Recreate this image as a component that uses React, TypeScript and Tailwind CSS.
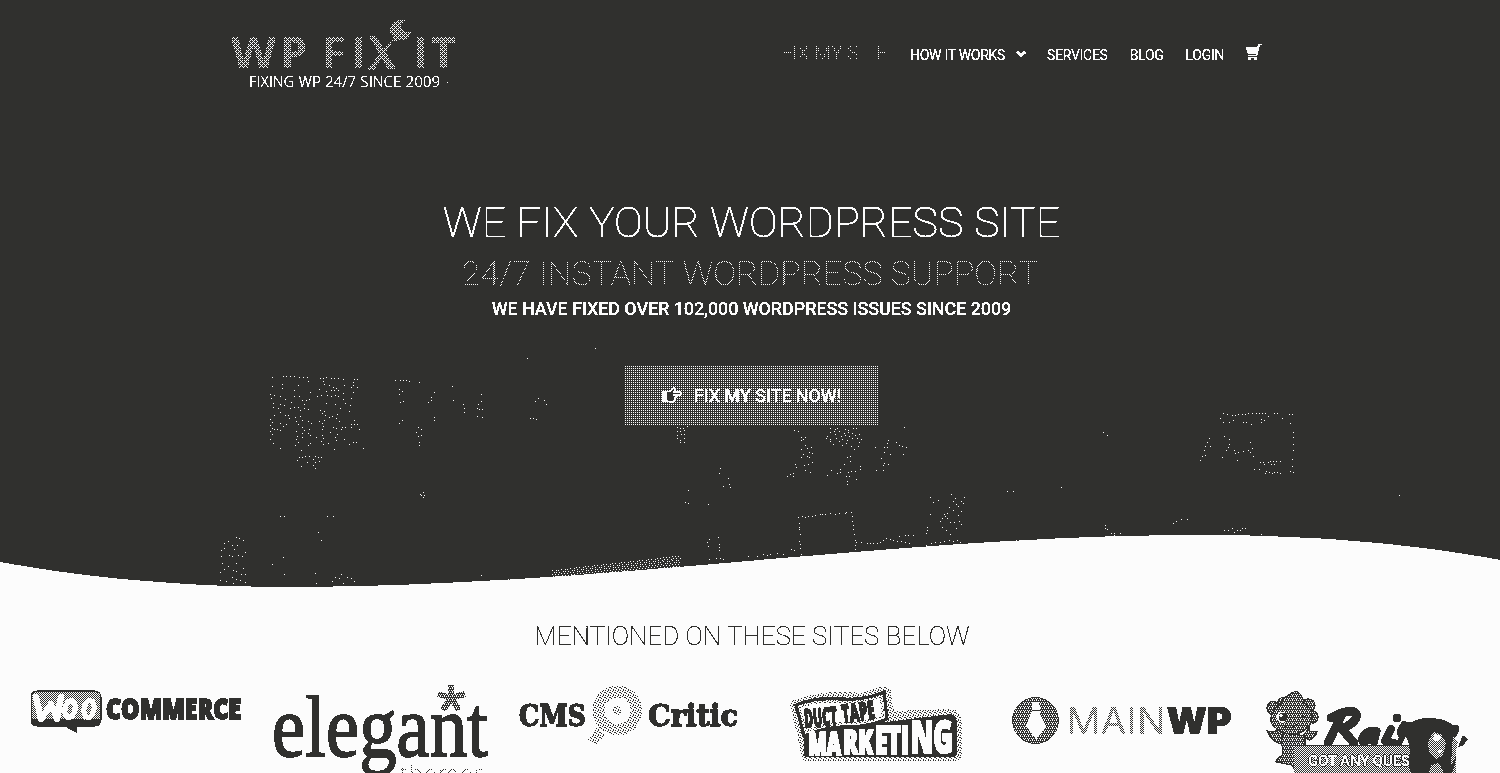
import React from "react";

const INK = "#30302e";
const PAPER = "#fcfcfc";

/* Specks of the hero illustration, three units per pixel, grouped by origin. */
const SPECKS: { x: number; y: number; pts: string }[] = [
  {
    x: 210,
    y: 340,
    pts: "1156,25 952,55 187,112 220,109 229,109 241,109 253,109 268,112 280,112 292,112 331,115 340,115 349,112 364,115 373,115 385,115 400,118 433,118 442,118 187,139 217,133 217,145 265,136 253,151 295,124 340,124 343,133 358,136 370,142 379,145 364,151 373,151 385,151 403,136 430,127 430,136 424,142 442,142 301,157 328,148 349,154 400,160 430,157 181,163 193,166 184,175 211,169 226,178 253,169 268,169 322,169 334,166 352,166 364,169 376,166 385,169 400,178 424,175 277,181 289,181 298,178 244,187 190,190 211,193 223,196 283,193 349,190 376,193 406,190 421,196 190,202 205,205 241,205 253,202 265,202 271,211 283,205 295,208 391,205 331,211 343,214 418,214 211,217 337,220 382,223 193,226 226,226 235,226 238,235 256,232 271,229 346,226 358,232 367,229 379,235 181,238 187,247 259,244 277,241 295,244 304,250 328,244 343,241 388,244 433,241 181,256 211,250 229,253 220,259 265,253 277,262 337,250 340,259 424,253 433,253 442,253 187,265 193,268 202,268 211,271 283,271 298,268 337,268 370,262 379,265 394,268 397,262 406,262 424,262 448,268 181,274 187,283 259,274 277,280 295,280 301,286 361,277 382,283 337,286 262,289 277,292 319,292 340,295 376,292 181,298 259,298 265,307 334,304 379,301 403,298 190,310 256,316 295,316 301,310 340,313 355,310 418,313 430,307 439,307 211,325 274,331 373,328 460,325 262,361 268,352 277,352 286,349 298,349 316,349 325,352 334,352 310,358 292,367 316,367 328,364 310,376 274,379 316,385 556,121 571,121 580,121 589,121 598,124 628,127 568,148 577,154 568,163 571,187 580,184 568,250 577,241 673,157 664,172 664,181 655,187 673,232 673,241 625,262 634,268 619,277 625,289 634,286 628,307 628,316 727,139 730,181 760,193 763,205 763,217 814,163 814,184 805,193 802,205 808,208 817,208 802,229 817,232 985,175 976,184 1003,181 1009,193 961,235 970,235 979,238 640,457 631,463 634,466 643,466 640,472 211,529 223,529 352,529 370,529 325,577 334,601 79,592 88,595 100,601 55,604 43,610 67,616 82,616 43,625 34,631 73,628 106,637 34,649 58,646 67,649 85,646 97,649 37,670 79,670 55,679 43,688 70,691 79,694 100,685 31,697 94,703 106,703 67,712 79,718 31,721 49,724 91,721 106,727 70,730 220,652 187,673 223,703 316,700 319,730 394,703 376,712 388,715 412,712 424,715 367,724 400,730 433,724 814,706",
  },
  {
    x: 540,
    y: 340,
    pts: "13,181 19,193 412,262 421,265 430,265 442,259 412,274 421,274 433,271 412,286 424,283 433,283 412,295 421,301 433,295 421,307 433,307 763,271 775,274 1093,262 784,292 796,292 784,301 790,298 796,316 802,325 814,322 784,328 808,337 817,340 790,343 802,349 808,352 784,352 817,367 766,373 769,382 793,376 805,373 796,391 811,397 760,400 751,403 742,409 760,409 871,265 886,268 892,265 916,268 925,271 940,265 949,265 871,277 883,274 898,274 913,280 925,277 937,280 958,283 862,289 886,283 904,289 916,286 928,289 946,286 859,295 871,298 889,295 907,298 922,301 937,295 952,295 964,298 871,304 898,304 919,310 958,307 880,313 907,316 934,319 955,319 943,328 922,352 931,349 931,364 913,373 961,379 901,388 925,397 934,394 946,394 961,388 874,391 892,400 901,397 862,406 919,409 928,409 949,418 922,424 922,433 1006,322 1045,301 1042,310 1033,322 1042,322 1069,307 1078,316 1087,319 1099,322 1033,337 1051,343 1090,343 1024,355 1033,370 1045,373 1030,376 1030,391 1009,391 541,385 538,400 565,415 550,439 568,433 571,442 445,451 436,487 445,490 505,493 775,532 787,529 796,532 805,529 817,529 826,526 841,523 847,523 856,523 871,520 886,523 898,520 916,520 919,517 934,517 778,550 778,562 778,568 781,583 778,604 781,613 781,625 784,643 937,529 937,544 940,556 940,568 943,583 946,601 946,616 946,628 949,607 964,607 982,610 991,610 1000,610 1012,610 1021,607 1030,601 1039,595 1051,598 1060,601 1072,604 1084,604 1096,607 1108,610 1078,589 1096,586 1105,586 1120,586 1171,472 1180,487 1195,481 1234,463 1246,475 1273,472 1240,484 1264,484 1249,493 1270,490 1228,502 1255,499 1240,511 1264,514 1213,523 1222,520 1216,529 1222,535 1207,535 1255,526 1258,544 1243,547 1231,547 1201,544 1264,553 1207,562 1219,571 1249,565 1231,583 1171,523 1162,562 1162,571 1159,580 508,598 502,607 505,619 535,592 538,613 538,622 538,631 508,658 529,655 541,655 550,658 625,649 652,649 670,643 682,646 691,643 712,640 730,643 754,628 763,631 1159,616 1174,610 1186,607 1201,607 1213,604 1228,601 1240,604 1252,601 1261,607",
  },
  {
    x: 980,
    y: 390,
    pts: "730,70 742,73 757,76 766,76 775,73 787,73 796,73 805,70 817,70 829,70 838,70 847,70 856,70 865,79 883,70 892,70 928,73 937,73 721,85 730,97 748,97 760,91 790,97 799,97 814,103 844,88 853,91 844,97 907,85 931,100 940,127 940,142 940,163 940,181 937,208 937,229 931,244 940,247 688,145 682,157 676,169 691,169 673,181 676,196 667,199 661,211 733,139 748,148 748,163 745,172 739,181 727,202 763,181 766,190 775,187 790,184 805,181 811,157 817,175 811,187 820,199 772,211 841,217 850,217 853,223 865,217 871,214 880,214 889,214 901,214 874,223 883,223 823,238 838,238 859,244 856,250 868,247 877,250 883,247 892,247 901,250 370,127 382,136 82,304 100,304 244,292 1258,316 376,406 376,415 382,418 394,430 403,430 403,436 421,430 580,400 589,394 604,388 622,388 733,421 745,421 757,415 763,427 772,421 781,421 787,415 796,415 844,433",
  },
];

/* The dotted plank that rises along the left side of the wave. */
function plank() {
  let d = "";
  for (let x = 552; x < 680; x += 3) {
    const top = 570 - (x - 554) * 0.115;
    const end = 580 - (x - 554) * 0.1;
    let row = 0;
    for (let y = Math.round(top); y < end; y += 2) {
      const jitter = (x * 7 + y * 13) % 5 === 0 ? 1 : 0;
      d += `M${x + jitter + (row % 2)} ${y}h1v1h-1z`;
      row++;
    }
  }
  return d;
}

function specks() {
  return SPECKS.map((g) =>
    g.pts
      .split(" ")
      .map((p) => {
        const [a, b] = p.split(",").map(Number);
        return `M${g.x + Math.floor(a / 3)} ${g.y + Math.floor(b / 3)}h1v1h-1z`;
      })
      .join(""),
  ).join("");
}

function Defs() {
  return (
    <svg width="0" height="0" className="absolute" aria-hidden="true">
      <defs>
        <filter id="mono" x="0" y="0" width="100%" height="100%" colorInterpolationFilters="sRGB">
          <feColorMatrix type="matrix" values=".33 .34 .33 0 0 .33 .34 .33 0 0 .33 .34 .33 0 0 0 0 0 1 0" />
          <feComponentTransfer>
            <feFuncR type="discrete" tableValues=".1883 .9883" />
            <feFuncG type="discrete" tableValues=".1883 .9883" />
            <feFuncB type="discrete" tableValues=".1805 .9883" />
          </feComponentTransfer>
        </filter>
        <pattern id="lightCheck" width="4" height="4" patternUnits="userSpaceOnUse">
          <path d="M0 0h1v1h-1zM2 0h1v1h-1zM1 1h1v1h-1zM0 2h1v1h-1zM2 2h1v1h-1zM3 3h1v1h-1z" fill={PAPER} shapeRendering="crispEdges" />
        </pattern>
        <pattern id="check" width="2" height="2" patternUnits="userSpaceOnUse">
          <rect width="2" height="2" fill={PAPER} />
          <path d="M0 0h1v1h-1zM1 1h1v1h-1z" fill={INK} shapeRendering="crispEdges" />
        </pattern>
        <pattern id="dense" width="4" height="4" patternUnits="userSpaceOnUse">
          <rect width="4" height="4" fill={INK} />
          <path d="M0 0h1v1h-1zM2 0h1v1h-1zM1 2h1v1h-1zM3 2h1v1h-1zM0 3h1v1h-1z" fill={PAPER} shapeRendering="crispEdges" />
        </pattern>
        <pattern id="faint" width="5" height="5" patternUnits="userSpaceOnUse">
          <path d="M0 0h1v1h-1zM2 1h1v1h-1zM4 2h1v1h-1zM1 3h1v1h-1zM3 4h1v1h-1zM3 0h1v1h-1zM0 2h1v1h-1z" fill={INK} shapeRendering="crispEdges" />
        </pattern>
        <linearGradient id="wooFade" x1="0" y1="0" x2="0" y2="1">
          <stop offset=".45" stopColor={INK} stopOpacity="0" />
          <stop offset=".85" stopColor={INK} stopOpacity="1" />
        </linearGradient>
      </defs>
    </svg>
  );
}

function HeroArt() {
  return (
    <svg className="absolute inset-0" width="1500" height="600" viewBox="0 0 1500 600" aria-hidden="true">
      <path d={specks() + plank()} fill={PAPER} shapeRendering="crispEdges" />
      <path d="M0 562C80 577 180 587 290 587C600 587 900 535 1200 535C1320 535 1420 545 1500 560V600H0Z" fill={PAPER} />
    </svg>
  );
}

function Brand() {
  return (
    <svg width="230" height="76" viewBox="230 14 230 76" className="shrink-0">
      <g fill="url(#lightCheck)" fontFamily="'Open Sans', sans-serif" fontWeight="700" fontSize="43">
        <text x="231" y="68" textLength="45" lengthAdjust="spacingAndGlyphs">W</text>
        <text x="280 322 351" y="68">PFI</text>
        <text x="413 431" y="68">IT</text>
        <path d="M369 36q5-1 8 2l19 31h-8zM367 70l27-33q-6-4-3-11q5-8 14-6q-6 4-3 10q3 4 9 2q-1 8-11 8l-7 1l-19 29z" />
      </g>
      <text x="249" y="87" fill={PAPER} fontFamily="'Open Sans', sans-serif" fontWeight="300" stroke={PAPER} strokeWidth=".15" fontSize="14.500" textLength="191">
        FIXING WP 24/7 SINCE 2009
      </text>
      <rect x="447" y="82" width="1" height="1" fill={PAPER} />
    </svg>
  );
}

function WooCommerce() {
  return (
    <svg width="212" height="93" viewBox="31 680 212 93">
      <path d="M38 691h56q7 0 7 7v21q0 7-7 7H76v6l-11-6H38q-7 0-7-7v-21q0-7 7-7z" fill="url(#check)" />
      <path d="M38 691h56q7 0 7 7v21q0 7-7 7H76v6l-11-6H38q-7 0-7-7v-21q0-7 7-7z" fill="url(#wooFade)" stroke={INK} strokeWidth="1.4" />
      <g fill="none" stroke={PAPER} strokeWidth="6" strokeLinecap="round" strokeLinejoin="round">
        <path d="M36 697L41 719L51 704L57 719L61 697" />
        <ellipse cx="70" cy="709" rx="5" ry="8.500" transform="rotate(12 70 709)" strokeWidth="5" />
        <ellipse cx="89" cy="709" rx="5" ry="8.500" transform="rotate(12 89 709)" strokeWidth="5" />
      </g>
      <text x="106" y="718.500" fill={INK} stroke={INK} strokeWidth="2" fontFamily="'Open Sans', sans-serif" fontWeight="800" fontSize="28" textLength="135" lengthAdjust="spacingAndGlyphs">
        COMMERCE
      </text>
    </svg>
  );
}

function Elegant() {
  return (
    <svg width="218" height="93" viewBox="273 680 218 93">
      <text x="272" y="756" fill={INK} stroke={INK} strokeWidth="2" fontFamily="'Liberation Serif', serif" fontSize="87" textLength="216" lengthAdjust="spacingAndGlyphs">
        elegant
      </text>
      <path d="M451 698V685M451 698L438 694M451 698L465 694M451 698L443 710M451 698L459 710" stroke="url(#dense)" strokeWidth="6" fill="none" />
      <text x="400" y="782" fill="url(#check)" fontFamily="'Open Sans', sans-serif" fontWeight="300" fontSize="23" textLength="85">
        themes
      </text>
    </svg>
  );
}

function CmsCritic() {
  return (
    <svg width="224" height="93" viewBox="517 680 224 93">
      <g fill={INK} stroke={INK} strokeWidth="1.700" fontFamily="'DejaVu Serif', serif" fontWeight="700" fontSize="30">
        <text x="519" y="726" textLength="67" lengthAdjust="spacingAndGlyphs">CMS</text>
        <text x="648" y="726" textLength="90" lengthAdjust="spacingAndGlyphs">Critic</text>
      </g>
      <circle cx="617.500" cy="710.500" r="19" fill="none" stroke="url(#faint)" strokeWidth="12" />
      <circle cx="617" cy="710.500" r="4.500" fill="url(#faint)" />
      <path d="M596 727l9 7-8 11-9-5z" fill="url(#faint)" />
    </svg>
  );
}

function DuctTape() {
  return (
    <svg width="178" height="93" viewBox="787 680 178 93">
      <g fill="url(#faint)" stroke="url(#faint)" strokeWidth="12" strokeLinejoin="round">
        <path d="M796 705Q830 695 860 699Q872 696 885 692L889 717L950 715Q956 715 956 724V755H807L804 738Z" />
      </g>
      <path d="M804 738L830 728L885 722L950 714Q957 714 957 724V754Q957 757 953 757H806Q804 757 804 754Z" fill={INK} />
      <path d="M796 705Q815 697 842 699Q862 701 884 692L887 719Q865 728 842 727Q822 728 804 736Z" fill={PAPER} stroke={INK} strokeWidth="3.500" />
      <path d="M799 708Q815 700 842 702Q862 704 881 696L883 716Q865 724 842 723Q822 724 807 731Z" fill="none" stroke="url(#faint)" strokeWidth="3" />
      <g fontFamily="'Open Sans', sans-serif" fontWeight="800">
        <text x="805" y="728" transform="rotate(-5 805 728)" fontSize="26" fill={INK} stroke={INK} strokeWidth="1.800" textLength="33" lengthAdjust="spacingAndGlyphs">DUCT</text>
        <text x="843" y="723" transform="rotate(-8 843 723)" fontSize="25" fill={INK} stroke={INK} strokeWidth="1.800" textLength="33" lengthAdjust="spacingAndGlyphs">TAPE</text>
        <g fill={PAPER} stroke={PAPER} strokeWidth="2">
          <text x="808" y="755" fontSize="31" textLength="33" lengthAdjust="spacingAndGlyphs">MA</text>
          <text x="843" y="754" fontSize="34" textLength="30" lengthAdjust="spacingAndGlyphs">RK</text>
          <text x="875" y="754" fontSize="39" textLength="34" lengthAdjust="spacingAndGlyphs">ETI</text>
          <text x="911" y="753" fontSize="45" textLength="42" lengthAdjust="spacingAndGlyphs">NG</text>
        </g>
      </g>
    </svg>
  );
}

function MainWp() {
  return (
    <svg width="222" height="93" viewBox="1011 680 222 93">
      <circle cx="1035.500" cy="720.500" r="23" fill="url(#dense)" stroke={INK} strokeWidth="1" />
      <path d="M1032 702h7l1 8h-8zM1032 711h8l7 15-11 13-10-13z" fill={PAPER} />
      <path d="M1032 710.500h8M1040 713l7 14" stroke={INK} fill="none" />
      <g fontFamily="Inter, sans-serif" fontSize="37">
        <text x="1067" y="734" fill="url(#check)" stroke="url(#check)" strokeWidth=".9" fontWeight="300" textLength="98">MAIN</text>
        <text x="1166.500" y="734" fill={INK} stroke={INK} strokeWidth="1" fontWeight="900" textLength="65" lengthAdjust="spacingAndGlyphs">WP</text>
      </g>
    </svg>
  );
}

function Raise() {
  return (
    <svg width="204" height="93" viewBox="1266 680 204 93">
      <g fill="url(#dense)" stroke={INK} strokeWidth="1.500">
        <ellipse cx="1273" cy="708" rx="6" ry="6.500" />
        <ellipse cx="1283" cy="703" rx="5" ry="5.500" />
        <ellipse cx="1308" cy="705" rx="7" ry="6" />
        <ellipse cx="1313" cy="717" rx="5" ry="6" />
        <path d="M1267 731q7 2 9 0l9 6-3 7q-10-2-15-13zM1317 732l-8-1 0-3-6 8 6 4q6-2 8-8z" />
        <path d="M1284 732q-5 8-1 16l-1 8q-6 2-6 6l16 3 5 8h8v-37z" />
        <path d="M1271 718q2-10 10-14q2-6 8-9q6-5 9-3q4 3 6 11q9 6 8 16q-3 12-17 15q-14 1-19-6q-6-4-5-10z" />
      </g>
      <ellipse cx="1282" cy="717" rx="5.500" ry="5.500" fill={PAPER} />
      <circle cx="1283" cy="717" r="4.500" fill={INK} />
      <circle cx="1281" cy="715.500" r="1.500" fill={PAPER} />
      <path d="M1300 718q4-3 7 0M1284 727q9 2 13-3" stroke={INK} strokeWidth="2" fill="none" />
      <g fill="none" stroke={INK} strokeWidth="9" strokeLinecap="round" strokeLinejoin="round">
        <path d="M1342 714L1328 743M1331 718Q1348 708 1356 713Q1359 721 1342 729L1354 743" />
        <path d="M1377 731Q1366 729 1362 738Q1361 744 1367 741Q1373 737 1377 731L1374 743" strokeWidth="7.500" />
        <path d="M1391 729L1385 741L1394 743" strokeWidth="8" />
        <path d="M1404 724Q1397 732 1402 737L1399 744" strokeWidth="6" />
      </g>
      <circle cx="1397" cy="718" r="4.500" fill={INK} />
      <path d="M1463 735l5 4-5 7-5 1 3-8z" fill={INK} />
    </svg>
  );
}

function Chat() {
  return (
    <div className="absolute bottom-0 left-[1294px] flex h-7 w-[162px] items-center border-t border-[#30302e] bg-[#30302e] bg-[repeating-conic-gradient(#30302e_0_25%,#fcfcfc_0_50%)] bg-[size:2px_2px] pl-[14px]">
      <span className="pt-1 font-[Roboto,sans-serif] text-[15px] leading-none font-medium tracking-[-0.15px] whitespace-nowrap text-[#fcfcfc] [text-shadow:1px_0_0_#30302e,-1px_0_0_#30302e,0_1px_0_#30302e,0_-1px_0_#30302e]">
        GOT ANY QUES
      </span>
      <svg className="absolute -top-[29px] left-[106px]" width="60" height="57" viewBox="1400 716 60 57" aria-hidden="true">
        <path d="M1401 724q2-5 11-3q9-5 21-4q14 1 20 7q7-1 6 4q0 6-5 9q4 16 1 26l-4 11h-39q-5-9-3-19q2-8-2-17q-6-8-6-14z" fill={INK} />
        <path d="M1433 731l8 2 5 9-3 12-6 4-8-7-1-10zM1453 735l5 6-3 16-4 8zM1431 764l8-2 5 11h-15z" fill="url(#check)" />
        <path d="M1435 732l6 4-2 4-6-1zM1436 750l6-1-2 3z" fill={PAPER} />
      </svg>
    </div>
  );
}

function PointingHand() {
  return (
    <svg className="mr-[12px] h-[16px] w-[20px]" viewBox="0 0 20 16" aria-hidden="true">
      <path d="M0 4h4.500v11H0z" fill={PAPER} />
      <path
        d="M5 4.500H8L11 1Q13 .5 13 2.500L12 5H17.500Q19 5 19 6.500T17.500 8H14V10.500L13 11V13L12 13.500Q12 15 10 15H8L5 14M14 8H11"
        fill={INK}
        stroke={PAPER}
        strokeWidth="1.400"
      />
    </svg>
  );
}

const NAV = ["SERVICES", "BLOG", "LOGIN"];

export default function App() {
  return (
    <div className="relative h-[773px] w-[1500px] overflow-hidden bg-[#fcfcfc] font-[Roboto,sans-serif] [filter:url(#mono)]">
      <Defs />
      <section className="relative h-[600px] bg-[#30302e] text-[#fcfcfc]">
        <HeroArt />
        <header className="relative flex h-[105px] items-start pt-[14px] pl-[230px]">
          <Brand />
          <nav className="ml-[321px] flex h-[82px] items-center text-[14px] tracking-[-0.28px] whitespace-nowrap">
            <a className="w-[129px] bg-[#fcfcfc] bg-[linear-gradient(90deg,#30302e_50%,transparent_50%),linear-gradient(#30302e_50%,transparent_50%)] bg-[size:2px_2px] bg-clip-text pb-1 text-[20px] leading-6 font-light tracking-[-0.2px] text-transparent">
              FIX MY SITE
            </a>
            <a className="w-[106px]">HOW IT WORKS</a>
            <svg className="mr-[21px] mb-[2px] h-[8px] w-[10px]" viewBox="0 0 10 8" aria-hidden="true">
              <path d="M1 2L5 6L9 2" fill="none" stroke={PAPER} strokeWidth="2.600" />
            </svg>
            {NAV.map((item) => (
              <a key={item} className="mr-[22px]">
                {item}
              </a>
            ))}
            <svg className="mb-[6px] h-[17px] w-[16px]" viewBox="0 0 16 17" fill={PAPER} aria-hidden="true">
              <path d="M0 4Q0 3 1 3H11L12.500 0H16V1H14L11 12H2.500V11H10.500V10H2Z" />
              <path d="M2 14h3v2H2zM8 14h3v2H8zM2 13h9v1H2z" />
            </svg>
          </nav>
        </header>
        <div className="relative flex flex-col items-center pt-[91px] pl-[3px]">
          <h1 className="text-[43px] leading-[52px] font-thin tracking-[0.05px] whitespace-nowrap [-webkit-text-stroke:0.3px_#fcfcfc]">WE FIX YOUR WORDPRESS SITE</h1>
          <h2 className="mt-[5px] mr-[3px] bg-[#fcfcfc] bg-[repeating-conic-gradient(#30302e_0_25%,#fcfcfc_0_50%)] bg-[size:2px_2px] bg-clip-text text-[34px] leading-[40px] font-thin whitespace-nowrap text-transparent">
            24/7 INSTANT WORDPRESS SUPPORT
          </h2>
          <p className="mt-[4px] text-[18px] leading-6 font-medium tracking-[-0.09px] whitespace-nowrap">WE HAVE FIXED OVER 102,000 WORDPRESS ISSUES SINCE 2009</p>
          <button className="mt-[44px] mr-px flex h-[61px] w-[254px] items-center justify-center rounded-[3px] bg-[#fcfcfc] bg-[linear-gradient(90deg,#30302e_50%,transparent_50%),linear-gradient(#30302e_50%,transparent_50%)] bg-[size:2px_2px] pb-px pl-px text-[18px] font-medium tracking-[-0.1px] whitespace-nowrap">
            <PointingHand />
            FIX MY SITE NOW!
          </button>
        </div>
      </section>
      <section className="text-[#30302e]">
        <h3 className="pt-[18px] pl-[4px] text-center text-[26px] leading-9 font-thin whitespace-nowrap [-webkit-text-stroke:0.4px_#30302e]">MENTIONED ON THESE SITES BELOW</h3>
        <div className="mt-[26px] flex h-[93px] items-start pl-[31px]">
          <div className="mr-[30px] shrink-0"><WooCommerce /></div>
          <div className="mr-[26px] shrink-0"><Elegant /></div>
          <div className="mr-[46px] shrink-0"><CmsCritic /></div>
          <div className="mr-[46px] shrink-0"><DuctTape /></div>
          <div className="mr-[33px] shrink-0"><MainWp /></div>
          <div className="shrink-0"><Raise /></div>
        </div>
      </section>
      <Chat />
    </div>
  );
}
